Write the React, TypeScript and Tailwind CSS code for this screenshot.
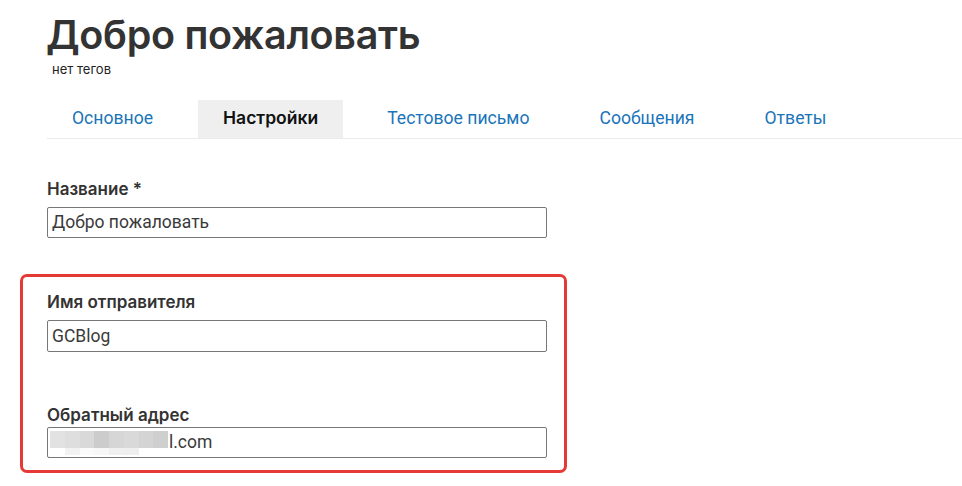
import React from "react";

const tabs = [
  { label: "Основное", active: false },
  { label: "Настройки", active: true },
  { label: "Тестовое письмо", active: false },
  { label: "Сообщения", active: false },
  { label: "Ответы", active: false },
];

const Field = ({ label, children, className = "" }: { label: string; children: React.ReactNode; className?: string }) => (
  <div className={className}>
    <div className="font-['Inter',sans-serif] font-semibold text-[17px] leading-[20px] text-[#333]">{label}</div>
    {children}
  </div>
);

const Blurred = () => {
  const top = ["#e2e2e2", "#dedede", "#d9d9d9", "#cccccc", "#d6d6d6", "#d9d9d9", "#d4d4d4", "#cfcfcf"];
  const bottom = ["#ffffff", "#f2f2f2", "#fafafa", "#f7f7f7", "#f0f0f0", "#efefef", "#ffffff", "#ffffff"];
  return (
    <div className="flex flex-col w-[118px] h-[24px] mr-[1px]">
      <div className="flex h-[17px]">
        {top.map((c, i) => (
          <span key={i} className="flex-1" style={{ background: c }} />
        ))}
      </div>
      <div className="flex h-[7px]">
        {bottom.map((c, i) => (
          <span key={i} className="flex-1" style={{ background: c }} />
        ))}
      </div>
    </div>
  );
};

export default function App() {
  return (
    <div className="w-[962px] h-[486px] bg-white overflow-hidden font-['Roboto',sans-serif] text-[#333]">
      <div className="pl-[46px] pt-[12px]">
        <h1 className="font-['Inter',sans-serif] font-semibold text-[39.5px] leading-[46px] tracking-[-0.3px] text-[#333]">
          Добро пожаловать
        </h1>
        <p className="ml-[6px] mt-[3px] text-[13px] leading-[16px] text-[#222] font-['Inter',sans-serif]">нет тегов</p>
      </div>

      <div className="ml-[47px] mt-[23px] flex border-b border-[#ebebeb] h-[39px]">
        {tabs.map((t) => (
          <div
            key={t.label}
            className={
              t.active
                ? "px-[25px] mr-[19px] flex items-center pb-[2px] bg-[#efefef] text-[#111] font-['Inter',sans-serif] font-semibold text-[17.5px]"
                : "px-[25px] mr-[20px] flex items-center pb-[2px] text-[#1a74b8] text-[17.6px]"
            }
          >
            {t.label}
          </div>
        ))}
      </div>

      <Field label="Название *" className="ml-[47px] mt-[40px]">
        <div className="mt-[8px] w-[500px] h-[31px] border border-[#777] rounded-[2px] flex items-center pl-[4px] text-[17.5px] text-[#3a3a3a]">
          Добро пожаловать
        </div>
      </Field>

      <div className="ml-[20px] mt-[36px] w-[547px] h-[199px] border-[3px] border-[#e53935] rounded-[7px] pl-[24px] pt-[15px]">
        <Field label="Имя отправителя">
          <div className="mt-[8px] w-[500px] h-[32px] border border-[#777] rounded-[2px] flex items-center pl-[4px] text-[17.5px] text-[#3a3a3a]">
            GCBlog
          </div>
        </Field>
        <Field label="Обратный адрес" className="mt-[53px]">
          <div className="mt-[2px] w-[500px] h-[31px] border border-[#777] rounded-[2px] flex items-center pl-[2px] text-[17.5px] text-[#3a3a3a]">
            <Blurred />
            l.com
          </div>
        </Field>
      </div>
    </div>
  );
}
